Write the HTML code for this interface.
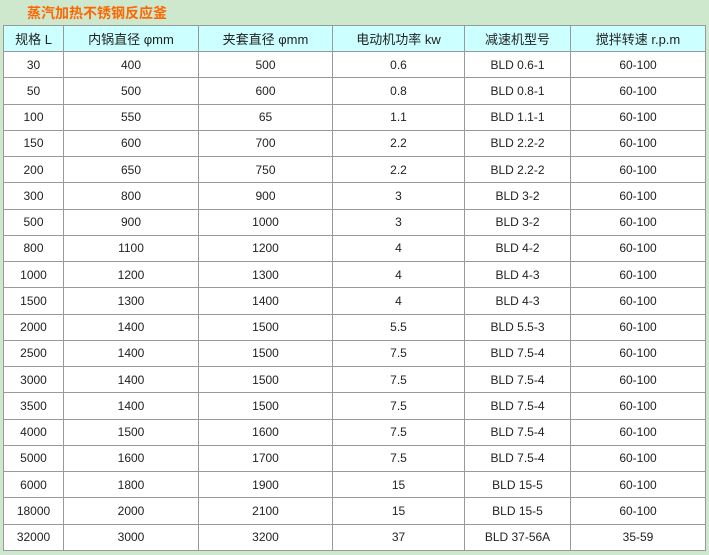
<!DOCTYPE html>
<html><head><meta charset="utf-8"><style>
body{margin:0;background:#cde8cd;width:709px;height:555px;overflow:hidden;font-family:"Liberation Sans","Noto Sans CJK SC",sans-serif;}
.t{position:absolute;left:27px;top:3px;color:#ff6600;font-weight:bold;font-size:14px;}
table{position:absolute;left:3px;top:25px;border-collapse:collapse;background:#fff;table-layout:fixed;}
td{border:1px solid #999;text-align:center;font-size:12px;color:#222;padding:0;height:25.26px;}
tr.h td{background:#ccffff;height:25px;font-size:13px;color:#222;}
</style></head><body>
<div class="t">蒸汽加热不锈钢反应釜</div>
<table>
<colgroup><col style="width:60px"><col style="width:135px"><col style="width:134px"><col style="width:132px"><col style="width:106px"><col style="width:135px"></colgroup>
<tr class="h"><td>规格 L</td><td>内锅直径 φmm</td><td>夹套直径 φmm</td><td>电动机功率 kw</td><td>减速机型号</td><td>搅拌转速 r.p.m</td></tr>
<tr><td>30</td><td>400</td><td>500</td><td>0.6</td><td>BLD 0.6-1</td><td>60-100</td></tr>
<tr><td>50</td><td>500</td><td>600</td><td>0.8</td><td>BLD 0.8-1</td><td>60-100</td></tr>
<tr><td>100</td><td>550</td><td>65</td><td>1.1</td><td>BLD 1.1-1</td><td>60-100</td></tr>
<tr><td>150</td><td>600</td><td>700</td><td>2.2</td><td>BLD 2.2-2</td><td>60-100</td></tr>
<tr><td>200</td><td>650</td><td>750</td><td>2.2</td><td>BLD 2.2-2</td><td>60-100</td></tr>
<tr><td>300</td><td>800</td><td>900</td><td>3</td><td>BLD 3-2</td><td>60-100</td></tr>
<tr><td>500</td><td>900</td><td>1000</td><td>3</td><td>BLD 3-2</td><td>60-100</td></tr>
<tr><td>800</td><td>1100</td><td>1200</td><td>4</td><td>BLD 4-2</td><td>60-100</td></tr>
<tr><td>1000</td><td>1200</td><td>1300</td><td>4</td><td>BLD 4-3</td><td>60-100</td></tr>
<tr><td>1500</td><td>1300</td><td>1400</td><td>4</td><td>BLD 4-3</td><td>60-100</td></tr>
<tr><td>2000</td><td>1400</td><td>1500</td><td>5.5</td><td>BLD 5.5-3</td><td>60-100</td></tr>
<tr><td>2500</td><td>1400</td><td>1500</td><td>7.5</td><td>BLD 7.5-4</td><td>60-100</td></tr>
<tr><td>3000</td><td>1400</td><td>1500</td><td>7.5</td><td>BLD 7.5-4</td><td>60-100</td></tr>
<tr><td>3500</td><td>1400</td><td>1500</td><td>7.5</td><td>BLD 7.5-4</td><td>60-100</td></tr>
<tr><td>4000</td><td>1500</td><td>1600</td><td>7.5</td><td>BLD 7.5-4</td><td>60-100</td></tr>
<tr><td>5000</td><td>1600</td><td>1700</td><td>7.5</td><td>BLD 7.5-4</td><td>60-100</td></tr>
<tr><td>6000</td><td>1800</td><td>1900</td><td>15</td><td>BLD 15-5</td><td>60-100</td></tr>
<tr><td>18000</td><td>2000</td><td>2100</td><td>15</td><td>BLD 15-5</td><td>60-100</td></tr>
<tr><td>32000</td><td>3000</td><td>3200</td><td>37</td><td>BLD 37-56A</td><td>35-59</td></tr>
</table>
</body></html>
